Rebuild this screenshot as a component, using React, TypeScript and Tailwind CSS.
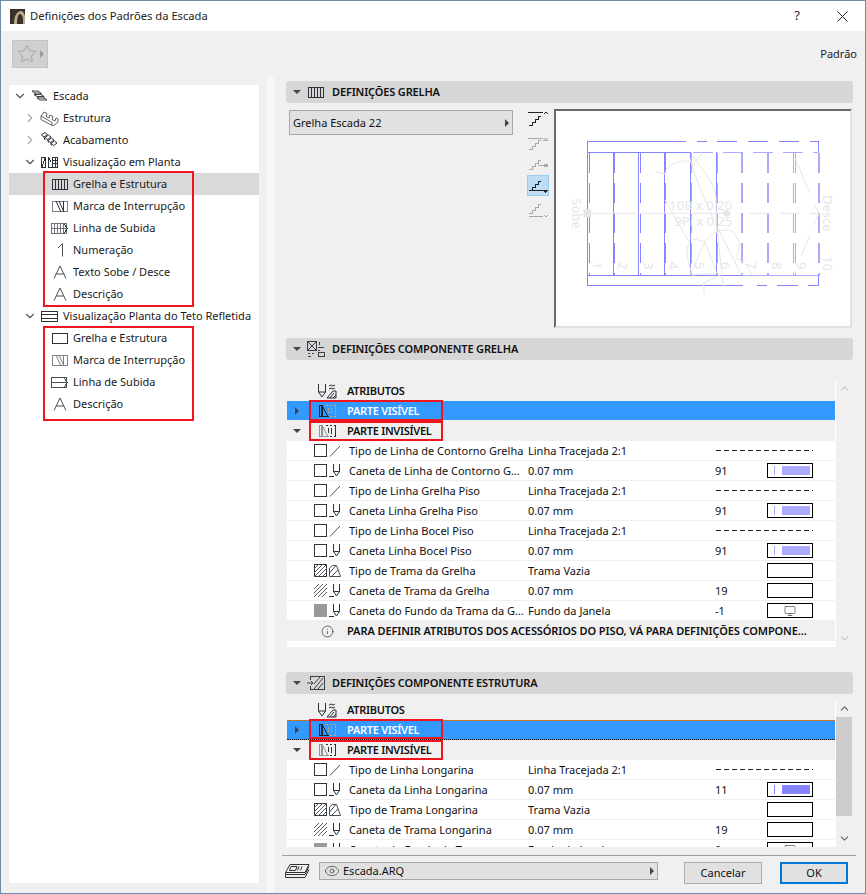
import React from "react";
import { ChevronDown, ChevronRight, Eye, Info, Monitor, Star } from "lucide-react";

const font = "font-['Noto_Sans',sans-serif]";

// small line icons used all over the dialog
const GridIcon = () => (
  <svg width="16" height="11" viewBox="0 0 16 11" fill="none" stroke="#2b3138" shapeRendering="crispEdges">
    <rect x="0.5" y="0.5" width="15" height="10" />
    <path d="M3.500 0v11M6.500 0v11M9.500 0v11M12.500 0v11" />
  </svg>
);

const BreakIcon = () => (
  <svg width="16" height="11" viewBox="0 0 16 11" fill="none" stroke="#7c8288">
    <rect x="0.5" y="0.5" width="15" height="10" shapeRendering="crispEdges" />
    <path d="M4 0l5 11M7 0l5 11" stroke="#2b3138" />
    <path d="M11.500 0v11" stroke="#2b3138" />
  </svg>
);

const RiserIcon = () => (
  <svg width="17" height="11" viewBox="0 0 17 11" fill="none" stroke="#6c7278" shapeRendering="crispEdges">
    <rect x="0.5" y="0.5" width="15" height="10" />
    <path d="M3.500 0v11M6.500 0v11M9.500 0v11M12.500 0v11M0 5.500h15" />
    <path d="M13 1l3.500 4.500-3.500 4.500" stroke="#2b3138" />
  </svg>
);

const LetterIcon = () => (
  <svg width="14" height="14" viewBox="0 0 14 14" fill="none" stroke="#4a5057">
    <path d="M1 13.500L7 1l6 12.500M3.300 9h7.400" />
  </svg>
);

const NumberIcon = () => (
  <svg width="14" height="14" viewBox="0 0 14 14" fill="none" stroke="#4a5057">
    <path d="M9.500 0.500v13M9.500 0.500L5 5" />
  </svg>
);

const PlainBox = () => (
  <svg width="16" height="11" viewBox="0 0 16 11" fill="none" stroke="#2b3138" shapeRendering="crispEdges">
    <rect x="0.5" y="0.5" width="15" height="10" />
  </svg>
);

const CeilBreak = () => (
  <svg width="16" height="11" viewBox="0 0 16 11" fill="none" stroke="#7c8288">
    <rect x="0.5" y="0.5" width="15" height="10" shapeRendering="crispEdges" />
    <path d="M4 0l5 11M7 0l5 11M11.500 0v11" />
  </svg>
);

const CeilRiser = () => (
  <svg width="17" height="11" viewBox="0 0 17 11" fill="none" stroke="#4a5057" shapeRendering="crispEdges">
    <rect x="0.5" y="0.5" width="15" height="10" />
    <path d="M0 5.500h15M13 1l3.500 4.500-3.500 4.500" />
  </svg>
);

const StairIcon = () => (
  <svg width="16" height="12" viewBox="0 0 16 12" fill="none" stroke="#3a4046">
    <path d="M0 1h6l3 2H3zM2 4.500h7l3 2H5zM5 8h7l3 2H8z" />
    <path d="M3 3v2M6 6.500v2M9 3v2M12 6.500v2" />
  </svg>
);

const BlockIcon = () => (
  <svg width="19" height="15" viewBox="0 0 19 15" fill="none" stroke="#5c6268">
    <path d="M1 5L4 1l3 1.500-1 3 3 1.500 1-3 3 1.500-1 3 3 1.500 1-3 2 1v3l-5 4L1 8.500z" />
    <path d="M1 5l11 6.500M12 11.500v3" />
  </svg>
);

const TwistIcon = () => (
  <svg width="17" height="16" viewBox="0 0 17 16" fill="none" stroke="#2b3138">
    <path d="M0.500 3L4 0.500l2.500 2L3 5zM4 5.500L7.500 3 10 5 6.500 7.500zM7 8.500L10.500 6 13 8 9.500 10.500zM10 11.500L13.500 9l2.500 2-3.500 2.500z" />
    <path d="M3 5l1 3M6.500 7.500l1 3M9.500 10.500l1 3" />
  </svg>
);

const PlanIcon = () => (
  <svg width="17" height="11" viewBox="0 0 17 11" fill="none" stroke="#2b3138" shapeRendering="crispEdges">
    <path d="M0.500 10.500V0.500h4v10zM1 10L4 1M7.500 10.500V0.500M7.500 0.500l3 5M7.500 10.500h3M11.500 0.500h5v10h-5zM11.500 3.500h5M11.500 6.500h5M14 0.500v10" />
  </svg>
);

const CeilPlanIcon = () => (
  <svg width="17" height="11" viewBox="0 0 17 11" fill="none" stroke="#2b3138" shapeRendering="crispEdges">
    <rect x="0.5" y="0.5" width="16" height="10" />
    <path d="M0 3.500h17M0 7.500h17" />
  </svg>
);

const CompIcon = () => (
  <svg width="18" height="17" viewBox="0 0 18 17" fill="none" stroke="#3a4046" shapeRendering="crispEdges">
    <path d="M0.500 0.500h9v9h-9zM1 1l8 8M9 1l-8 8M12.500 1v3M11 6h6M11 9h2M11.500 11.500h6v4h-6zM1 12h2M5 12h2M1 15h3" />
  </svg>
);

const StructIcon = () => (
  <svg width="18" height="15" viewBox="0 0 18 15" fill="none" stroke="#3a4046">
    <path d="M3 .500h14v13H3M3 .500v3M3 10v3.500" shapeRendering="crispEdges" />
    <path d="M7 13l9-11M11 13l5-6M7 8l6-7" />
    <path d="M0 7h6M4 5l2 2-2 2" />
  </svg>
);

const AttrIcon = () => (
  <svg width="19" height="15" viewBox="0 0 19 15" fill="none" stroke="#2b3138">
    <path d="M.500 0v8l3.500 5 3.500-5V0M0.500 8h7" />
    <path d="M11 2l2-1 2 1 2-1M11 5l2-1 2 1 2-1" />
    <path d="M9 14l6-7h3v7zM12 14l4-5M15 14l3-3" />
  </svg>
);

// the "parte visível / invisível" glyph: hatched wedge plus dashed ghost
const PartIcon = ({ on }: { on?: boolean }) => (
  <svg width="17" height="12" viewBox="0 0 17 12" fill="none" shapeRendering="crispEdges">
    <g stroke={on ? "#1c2530" : "#8f9499"}>
      <path d="M.500 11.500V.500h3v11zM3 .500l6 11H.500" />
      <path d="M2 1v10" />
    </g>
    <g stroke={on ? "#c9a97e" : "#2b3138"}>
      <path d="M7 .500h2M11 .500h2M15 .500h1.500V11.500H15M11 11.500h2M9.500 3v5M12.500 3v6" strokeDasharray={on ? "2 1" : undefined} />
    </g>
  </svg>
);

const PenIcon = () => (
  <svg width="12" height="13" viewBox="0 0 12 13" fill="none" stroke="#2b3138">
    <path d="M4.500 0v7.500l3 4.500 3-4.500V0M4.500 7.500h6M0 12.500h5" />
  </svg>
);

const SlashIcon = () => (
  <svg width="12" height="12" viewBox="0 0 12 12" fill="none" stroke="#4a5057">
    <path d="M1 11.500L11 1" />
  </svg>
);

const FillMini = () => (
  <svg width="12" height="12" viewBox="0 0 12 12" fill="none" stroke="#4a5057">
    <path d="M.500 11.500V3l3-2.500h4l4 11zM.500 8l6-7M3 11l6-6" />
  </svg>
);

const HatchBox = ({ framed }: { framed?: boolean }) => (
  <svg width="13" height="13" viewBox="0 0 13 13" fill="none" stroke="#555b60">
    {framed && <rect x=".5" y=".5" width="12" height="12" stroke="#2b3138" shapeRendering="crispEdges" />}
    <path d="M0 5L5 0M0 9L9 0M0 13L13 0M4 13L13 4M8 13L13 8" />
  </svg>
);

const CheckBox = () => <span className="block h-[13px] w-[13px] border border-[#333]" />;
const GrayBox = () => <span className="block h-[13px] w-[13px] bg-[#97999b]" />;

const DashLine = () => (
  <svg width="97" height="1" className="block shrink-0">
    <line x1="0" y1="0.5" x2="97" y2="0.5" stroke="#222" strokeDasharray="5 3" />
  </svg>
);

const Swatch = ({ color, kind }: { color?: string; kind?: "screen" }) => (
  <span className="flex h-[15px] w-[46px] items-center justify-center border border-black bg-white">
    {color && (
      <span className="flex w-full items-center pl-[6px] pr-[2px]">
        <span className="h-[9px] w-px" style={{ background: color }} />
        <span className="ml-[7px] h-[9px] flex-1" style={{ background: color }} />
      </span>
    )}
    {kind === "screen" && <Monitor size={12} strokeWidth={1.2} className="text-[#333]" />}
  </span>
);

const Redbox = ({ className }: { className: string }) => (
  <span className={"pointer-events-none absolute border-2 border-[#f0141e] " + className} />
);

const TreeRow = ({
  depth,
  arrow,
  icon,
  label,
  selected,
}: {
  depth: number;
  arrow?: "open" | "closed";
  icon: React.ReactNode;
  label: string;
  selected?: boolean;
}) => {
  const left = depth === 0 ? "pl-[4px]" : depth === 1 ? "pl-[14px]" : "pl-[38px]";
  return (
    <div className={"flex h-[22px] items-center text-[#1a1a1a] " + left + (selected ? " bg-[#d9d9d9]" : "")}>
      {depth < 2 && (
        <span className="flex w-[14px] justify-center">
          {arrow === "open" ? (
            <ChevronDown size={14} strokeWidth={2} className="text-[#555]" />
          ) : (
            <ChevronRight size={14} strokeWidth={2} className="text-[#aaa]" />
          )}
        </span>
      )}
      <span className="flex w-[25px] items-center justify-center">{icon}</span>
      <span className="ml-[1px] whitespace-nowrap">{label}</span>
    </div>
  );
};

const PanelHeader = ({ icon, title }: { icon: React.ReactNode; title: string }) => (
  <div className="flex h-[22px] items-center rounded-[3px] bg-[#d6d6d6] pl-[7px] font-semibold text-[#111]">
    <span className="mr-[4px] h-0 w-0 border-x-[4px] border-t-[4px] border-x-transparent border-t-[#444]" />
    <span className="flex w-[22px] justify-center">{icon}</span>
    <span className="ml-[5px] tracking-[-0.15px]">{title}</span>
  </div>
);

const AttrHeader = ({ h }: { h: string }) => (
  <div className={"flex shrink-0 items-center bg-[#f0f0f0] font-semibold text-[#111] " + h}>
    <span className="ml-[31px] flex w-[19px] justify-center">
      <AttrIcon />
    </span>
    <span className="ml-[10px] tracking-[-0.3px]">ATRIBUTOS</span>
  </div>
);

const GroupRow = ({
  open,
  blue,
  focus,
  icon,
  label,
  h,
}: {
  open?: boolean;
  blue?: boolean;
  focus?: boolean;
  icon: React.ReactNode;
  label: string;
  h: string;
}) => (
  <div
    className={
      "flex shrink-0 items-center font-semibold " +
      h +
      (blue ? " bg-[#3399ff] text-white" : " bg-[#f0f0f0] text-[#111]") +
      (focus ? " border-y border-dotted border-t-[#c0702a] border-b-[#111]" : "")
    }
  >
    <span className="flex w-[20px] justify-center">
      {open ? (
        <span className="h-0 w-0 border-x-[4px] border-t-[4px] border-x-transparent border-t-[#444]" />
      ) : (
        <span className="h-0 w-0 border-y-[4px] border-l-[4px] border-y-transparent border-l-[#444]" />
      )}
    </span>
    <span className="flex w-[40px] justify-center">{icon}</span>
    <span className="tracking-[-0.3px]">{label}</span>
  </div>
);

type Row = {
  a: React.ReactNode;
  b: React.ReactNode;
  name: string;
  value: string;
  num?: string;
  end?: React.ReactNode;
};

const AttrRow = ({ a, b, name, value, num, end }: Row) => (
  <div className="flex h-[20px] shrink-0 items-center border-b border-[#f0f0f0] bg-white text-[#111]">
    <span className="flex w-[40px] shrink-0 justify-end">{a}</span>
    <span className="flex w-[16px] shrink-0 justify-center">{b}</span>
    <span className="ml-[6px] w-[179px] shrink-0 whitespace-nowrap pt-[1px]">{name}</span>
    <span className="w-[187px] shrink-0 whitespace-nowrap pt-[1px]">{value}</span>
    <span className="w-[52px] shrink-0 pt-[1px]">{num}</span>
    <span className="flex w-[46px] justify-end">{end}</span>
  </div>
);

const gridRows: Row[] = [
  { a: <CheckBox />, b: <SlashIcon />, name: "Tipo de Linha de Contorno Grelha", value: "Linha Tracejada 2:1", end: <DashLine /> },
  { a: <CheckBox />, b: <PenIcon />, name: "Caneta de Linha de Contorno G...", value: "0.07 mm", num: "91", end: <Swatch color="#aaaaff" /> },
  { a: <CheckBox />, b: <SlashIcon />, name: "Tipo de Linha Grelha Piso", value: "Linha Tracejada 2:1", end: <DashLine /> },
  { a: <CheckBox />, b: <PenIcon />, name: "Caneta Linha Grelha Piso", value: "0.07 mm", num: "91", end: <Swatch color="#aaaaff" /> },
  { a: <CheckBox />, b: <SlashIcon />, name: "Tipo de Linha Bocel Piso", value: "Linha Tracejada 2:1", end: <DashLine /> },
  { a: <CheckBox />, b: <PenIcon />, name: "Caneta Linha Bocel Piso", value: "0.07 mm", num: "91", end: <Swatch color="#aaaaff" /> },
  { a: <HatchBox framed />, b: <FillMini />, name: "Tipo de Trama da Grelha", value: "Trama Vazia", end: <Swatch /> },
  { a: <HatchBox />, b: <PenIcon />, name: "Caneta de Trama da Grelha", value: "0.07 mm", num: "19", end: <Swatch /> },
  { a: <GrayBox />, b: <PenIcon />, name: "Caneta do Fundo da Trama da G...", value: "Fundo da Janela", num: "-1", end: <Swatch kind="screen" /> },
];

const frameRows: Row[] = [
  { a: <CheckBox />, b: <SlashIcon />, name: "Tipo de Linha Longarina", value: "Linha Tracejada 2:1", end: <DashLine /> },
  { a: <CheckBox />, b: <PenIcon />, name: "Caneta da Linha Longarina", value: "0.07 mm", num: "11", end: <Swatch color="#8585ff" /> },
  { a: <HatchBox framed />, b: <FillMini />, name: "Tipo de Trama Longarina", value: "Trama Vazia", end: <Swatch /> },
  { a: <HatchBox />, b: <PenIcon />, name: "Caneta de Trama Longarina", value: "0.07 mm", num: "19", end: <Swatch /> },
  { a: <GrayBox />, b: <PenIcon />, name: "Caneta do Fundo da Trama", value: "Fundo da Janela", num: "0", end: <Swatch kind="screen" /> },
];

// preview drawing, viewBox is 3x the pixel size so stroke 3 = 1px
const Preview = () => (
  <svg width="294" height="214" viewBox="18 33 882 642" className="block" fontFamily="Noto Sans, sans-serif">
    <g fill="none" stroke="#8585ff" strokeWidth="3" shapeRendering="crispEdges">
      <path d="M408 125H112V556H580M112 157H421M112 526H575" />
      <path d="M190 157V526M266 157V526M344 157V526M421 157V526M498 157V526" />
      <path d="M440 125H470M500 125H560M594 125H654M686 125H746M780 125H805V157M805 526V556H775M745 556H680M650 556H620" />
      <path d="M118 160V526M194 160V526M270 160V526M347 160V526" strokeDasharray="60 30" />
    </g>
    <g fill="none" stroke="#aaaaff" strokeWidth="3" shapeRendering="crispEdges">
      <path d="M430 157H808" strokeDasharray="60 30" />
      <path d="M575 526H810" />
      <path d="M425 160V526M503 160V526M730 160V526M735 160V526" strokeDasharray="60 30" />
      <path d="M576 160V526M653 160V526M808 160V526" strokeWidth="6" strokeDasharray="60 30" />
    </g>
    <g fill="none" stroke="#e6e6e6" strokeWidth="3">
      <path d="M112 340H545M598 340H660M690 340H750M780 340H805" />
      <path d="M315 215L345 222C345 200 380 180 420 183L430 190C450 170 455 165 455 158" />
      <path d="M425 165C450 200 490 240 498 290L500 400" />
      <path d="M345 300L420 430C405 440 410 470 425 520" />
      <path d="M420 175C445 270 500 380 575 525" />
      <path d="M420 415L465 425C480 400 520 380 550 395L570 430L560 475C590 490 600 510 605 525" />
      <path d="M465 425L420 525M465 425L500 520M500 380L520 560M425 525L500 520M510 525L460 550L463 583" />
      <path d="M735 175L780 280M780 405L755 465M790 310L808 340L790 375" />
    </g>
    <g fill="#e6e6e6" fontSize="39">
      <rect x="100" y="328" width="24" height="24" />
      <circle cx="530" cy="340" r="10" />
      <text x="358" y="330">10B x 0.20</text>
      <text x="373" y="378">9Pi x 0.25</text>
      <text transform="translate(66,295) rotate(90)">Sobe</text>
      <text transform="translate(818,285) rotate(90)">Desce</text>
      {[
        ["1", 125],
        ["2", 203],
        ["3", 281],
        ["4", 358],
        ["5", 435],
        ["6", 512],
        ["7", 590],
        ["8", 666],
        ["9", 742],
      ].map(([n, x]) => (
        <text key={n} transform={"translate(" + x + ",486) rotate(90)"}>
          {n}
        </text>
      ))}
      <text transform="translate(818,468) rotate(90)">10</text>
    </g>
  </svg>
);

const stairShift = { up: 5, upf: 5, dot: 2, downf: 3, down: 0 };

const StairMode = ({
  className,
  active,
  dim,
  mark,
}: {
  className: string;
  active?: boolean;
  dim?: boolean;
  mark: "up" | "upf" | "dot" | "downf" | "down";
}) => {
  const c = dim ? "#a9a9a9" : "#222";
  return (
    <div className={"flex w-[22px] items-center justify-center " + className + (active ? " border border-[#99ccee] bg-[#bedcf4]" : "")}>
      <svg width="20" height="15" viewBox="0 0 20 15" fill="none" stroke={c} shapeRendering="crispEdges">
        <path d="M0 9.500h3v-3h3v-3h3v-3h3" transform={"translate(1," + stairShift[mark] + ")"} />
        {mark === "up" && <path d="M0 1.500h15M16 3l2-2 2 2" />}
        {mark === "upf" && <path d="M0 3.500h15M16 5h4l-2-2z" />}
        {mark === "dot" && (
          <>
            <path d="M10 7.500h6" />
            <circle cx="18" cy="7.500" r="1.500" fill={c} />
          </>
        )}
        {mark === "downf" && <path d="M1 12.500h14M15 12h5l-2.500 2.500z" fill={c} />}
        {mark === "down" && <path d="M1 12.500h14M16 11l2 2 2-2" />}
      </svg>
    </div>
  );
};

const Scrollbar = ({ thumb }: { thumb?: boolean }) => (
  <div className="flex w-[17px] flex-col border-l border-white bg-[#f0f0f0]">
    <div className="flex h-[17px] shrink-0 items-center justify-center">
      <ChevronDown size={13} strokeWidth={2} className={"rotate-180 " + (thumb ? "text-[#666]" : "text-[#c8c8c8]")} />
    </div>
    <div className="flex-1">{thumb && <div className="h-[99px] bg-[#cdcdcd]" />}</div>
    <div className="flex h-[17px] shrink-0 items-center justify-center">
      <ChevronDown size={13} strokeWidth={2} className={thumb ? "text-[#666]" : "text-[#c8c8c8]"} />
    </div>
  </div>
);

export default function App() {
  return (
    <div className={"flex h-[894px] w-[866px] flex-col overflow-hidden border border-[#6d8cab] bg-[#f0f0f0] text-[11px] " + font}>
      {/* title bar */}
      <div className="flex h-[30px] shrink-0 items-center bg-white pl-[9px] text-[#222]">
        <svg width="15" height="15" viewBox="0 0 15 15" className="mr-[5px] block">
          <rect width="15" height="15" fill="#3a3128" />
          <path d="M4 15C4 7 7 2 11 2c2 0 3 2 4 5v8h-2V9c-1-3-2-4-3-4-2 0-3 4-3 10z" fill="#b9ac8e" />
        </svg>
        <span className="text-[11.200px]">Definições dos Padrões da Escada</span>
        <span className="ml-auto mr-[37px] text-[13px]">?</span>
        <svg width="11" height="11" viewBox="0 0 11 11" stroke="#222" className="mr-[17px]">
          <path d="M0.500 0.500l10 10M10.500 0.500l-10 10" />
        </svg>
      </div>

      {/* toolbar */}
      <div className="flex h-[50px] shrink-0 items-start justify-between pl-[11px] pr-[8px] pt-[9px]">
        <div className="flex h-[28px] w-[36px] items-center justify-center gap-[3px] border border-[#c4c4c4] bg-[#d0d0d0]">
          <Star size={20} strokeWidth={1} className="text-[#9a9a9a]" />
          <span className="h-0 w-0 border-y-[4px] border-l-[4px] border-y-transparent border-l-[#9a9a9a]" />
        </div>
        <span className="mt-[6px] text-[#222]">Padrão</span>
      </div>

      <div className="flex min-h-0 flex-1">
        {/* tree */}
        <div className="ml-[8px] mt-[4px] mb-[10px] w-[250px] shrink-0 bg-white">
          <TreeRow depth={0} arrow="open" icon={<StairIcon />} label="Escada" />
          <TreeRow depth={1} arrow="closed" icon={<BlockIcon />} label="Estrutura" />
          <TreeRow depth={1} arrow="closed" icon={<TwistIcon />} label="Acabamento" />
          <TreeRow depth={1} arrow="open" icon={<PlanIcon />} label="Visualização em Planta" />
          <div className="relative">
            <Redbox className="left-[34px] right-[65px] top-[-2px] bottom-[-2px]" />
            <TreeRow depth={2} icon={<GridIcon />} label="Grelha e Estrutura" selected />
            <TreeRow depth={2} icon={<BreakIcon />} label="Marca de Interrupção" />
            <TreeRow depth={2} icon={<RiserIcon />} label="Linha de Subida" />
            <TreeRow depth={2} icon={<NumberIcon />} label="Numeração" />
            <TreeRow depth={2} icon={<LetterIcon />} label="Texto Sobe / Desce" />
            <TreeRow depth={2} icon={<LetterIcon />} label="Descrição" />
          </div>
          <TreeRow depth={1} arrow="open" icon={<CeilPlanIcon />} label="Visualização Planta do Teto Refletida" />
          <div className="relative">
            <Redbox className="left-[34px] right-[65px] top-[-1px] bottom-[-6px]" />
            <TreeRow depth={2} icon={<PlainBox />} label="Grelha e Estrutura" />
            <TreeRow depth={2} icon={<CeilBreak />} label="Marca de Interrupção" />
            <TreeRow depth={2} icon={<CeilRiser />} label="Linha de Subida" />
            <TreeRow depth={2} icon={<LetterIcon />} label="Descrição" />
          </div>
        </div>

        {/* splitter strip */}
        <div className="ml-[8px] mt-[-4px] w-[7px] shrink-0 bg-[#f7f7f7]" />

        {/* right side */}
        <div className="ml-[12px] flex min-w-0 flex-1 flex-col pr-[12px]">
          <PanelHeader icon={<GridIcon />} title="DEFINIÇÕES GRELHA" />

          <div className="mt-[7px] flex h-[217px] shrink-0">
            <div className="ml-[3px] flex h-[25px] w-[224px] items-center justify-between border border-[#a8a8a8] bg-[#e1e1e1] pl-[3px] pr-[3px] text-[#111]">
              <span className="pt-[1px]">Grelha Escada 22</span>
              <span className="h-0 w-0 border-y-[4px] border-l-[4px] border-y-transparent border-l-[#444]" />
            </div>
            <div className="ml-[14px] flex w-[22px] flex-col">
              <StairMode className="h-[16px]" mark="up" />
              <StairMode className="mt-[8px] h-[16px]" mark="upf" dim />
              <StairMode className="mt-[7px] h-[16px]" mark="dot" dim />
              <StairMode className="mt-[2px] h-[21px]" mark="downf" active />
              <StairMode className="mt-[7px] h-[16px]" mark="down" dim />
            </div>
            <div className="ml-[5px] mt-[-1px] h-[219px] w-[298px] border-2 border-[#6a6a6a] border-r-[#e2e2e2] border-b-[#e2e2e2] bg-white">
              <Preview />
            </div>
          </div>

          <div className="mt-[11px]">
            <PanelHeader icon={<CompIcon />} title="DEFINIÇÕES COMPONENTE GRELHA" />
          </div>

          {/* grid component table */}
          <div className="ml-[1px] mt-[20px] flex h-[267px] w-[566px] shrink-0">
            <div className="flex w-[548px] flex-col bg-white">
              <AttrHeader h="h-[21px] pt-[1px]" />
              <div className="relative">
                <Redbox className="left-[22px] top-[-1px] h-[21px] w-[134px]" />
                <Redbox className="left-[22px] top-[20px] h-[20px] w-[134px]" />
                <GroupRow blue h="h-[19px] pt-[1px]" icon={<PartIcon on />} label="PARTE VISÍVEL" />
                <GroupRow open h="h-[21px] pt-[1px]" icon={<PartIcon />} label="PARTE INVISÍVEL" />
              </div>
              {gridRows.map((r) => (
                <AttrRow key={r.name} {...r} />
              ))}
              <div className="flex h-[20px] items-center bg-[#f0f0f0] pt-[1px] font-semibold text-[#111]">
                <Info size={13} strokeWidth={1.3} className="ml-[34px] mr-[13px] text-[#333]" />
                <span className="whitespace-nowrap tracking-[-0.1px]">PARA DEFINIR ATRIBUTOS DOS ACESSÓRIOS DO PISO, VÁ PARA DEFINIÇÕES COMPONE...</span>
              </div>
            </div>
            <Scrollbar />
          </div>

          <div className="mt-[25px]">
            <PanelHeader icon={<StructIcon />} title="DEFINIÇÕES COMPONENTE ESTRUTURA" />
          </div>

          {/* frame component table */}
          <div className="ml-[1px] mt-[6px] flex h-[147px] w-[566px] shrink-0">
            <div className="flex w-[548px] flex-col overflow-hidden bg-white">
              <AttrHeader h="h-[20px]" />
              <div className="relative shrink-0">
                <GroupRow blue focus h="h-[20px]" icon={<PartIcon on />} label="PARTE VISÍVEL" />
                <GroupRow open h="h-[20px]" icon={<PartIcon />} label="PARTE INVISÍVEL" />
                <Redbox className="left-[22px] top-[-1px] h-[20px] w-[134px]" />
                <Redbox className="left-[22px] top-[20px] h-[20px] w-[134px]" />
              </div>
              {frameRows.map((r) => (
                <AttrRow key={r.name} {...r} />
              ))}
            </div>
            <Scrollbar thumb />
          </div>

          {/* footer */}
          <div className="ml-[-4px] mr-[-3px] mt-[8px] flex h-[38px] shrink-0 items-start border-t border-[#a0a0a0] pl-[2px] pt-[6px]">
            <svg width="26" height="15" viewBox="0 0 26 15" fill="none" stroke="#333" className="mt-[2px]">
              <path d="M6 .500h19l-4 8H1.500zM1.500 8.500v2h19.500l4-8M1.500 11v2.500h19.500l4-8M7 2.500h6l-1.500 4H5.500zM15 2.500l-1.500 4M18 2.500l-1.500 4" />
            </svg>
            <div className="ml-[9px] flex h-[18px] w-[339px] items-center border border-[#a8a8a8] bg-[#e1e1e1] pl-[4px] pr-[3px] text-[#111]">
              <Eye size={16} strokeWidth={1} className="mr-[3px] text-[#333]" />
              <span>Escada.ARQ</span>
              <span className="ml-auto h-0 w-0 border-y-[4px] border-l-[4px] border-y-transparent border-l-[#444]" />
            </div>
            <button className="ml-[26px] h-[22px] w-[78px] border border-[#adadad] bg-[#e1e1e1] text-[#111]">Cancelar</button>
            <button className="ml-[18px] h-[22px] w-[68px] border-2 border-[#0078d7] bg-[#e1e1e1] text-[#111]">OK</button>
          </div>
        </div>
      </div>
    </div>
  );
}
